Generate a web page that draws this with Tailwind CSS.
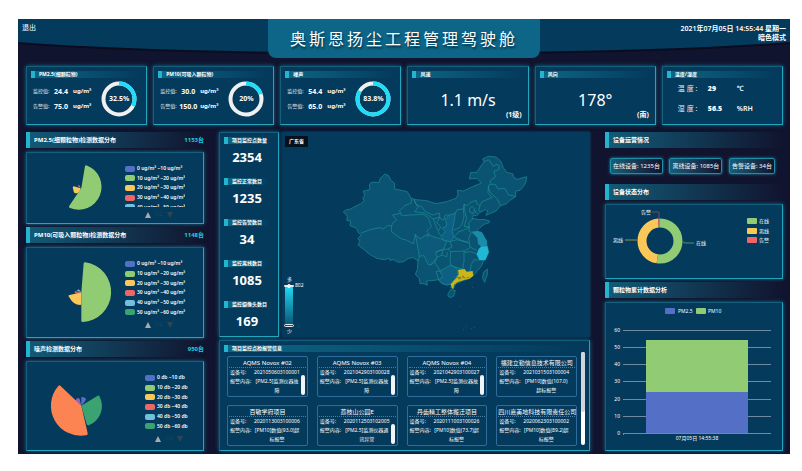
<!DOCTYPE html>
<html lang="zh-CN">
<head>
  <meta charset="UTF-8" />
  <meta name="viewport" content="width=device-width, initial-scale=1.0" />
  <title>奥斯恩扬尘工程管理驾驶舱</title>
  <script src="https://cdn.jsdelivr.net/npm/@tailwindcss/browser@4"></script>
  <style>
    body {
      font-family: 'Noto Sans', 'Noto Sans CJK SC', sans-serif;
    }
    .panel {
      background: #043a5c;
      border: 1px solid #12607c;
      border-right-color: #23a5be;
      border-bottom-color: #23a5be;
      box-shadow: 0 0 4px #0f7391;
    }
    .bar-title {
      border-left: 4px solid #21b5cf;
      background: linear-gradient(90deg, #125a76, #11142e);
    }
    .sub-title {
      border-left: 4px solid #21b5cf;
      background: linear-gradient(90deg, #0d6483, #043a5c);
    }
  </style>
</head>
<body class="bg-white pt-[19px] pl-[18px] pr-3 pb-[17px] text-white">

<div class="bg-[#11142e] pb-[3px]">

  <!-- Top bar -->
  <header class="relative h-[47px]">
    <svg class="absolute inset-0 w-full h-[40px]" viewBox="0 0 772 40" preserveAspectRatio="none">
      <path d="M0 0H772V25Q640 35 386 36Q130 35 0 25Z" fill="#0a0d20" />
      <path d="M0 0H772V23Q640 33 386 34Q130 33 0 23Z" fill="#043a5c" />
    </svg>
    <div class="relative grid grid-cols-[1fr_272px_1fr]">
      <div class="pl-1 pt-1">
        <a href="#" class="block text-[7px] leading-[10px]">退出</a>
      </div>
      <h1 class="h-[39px] rounded-b-lg bg-[#0d6587] text-center text-[16px] leading-[40px] tracking-[3px] [text-shadow:1px_2px_2px_#063047]">奥斯恩扬尘工程管理驾驶舱</h1>
      <div class="pr-1 pt-[5px] flex flex-col items-end text-[7px] leading-[9px] font-semibold">
        <time>2021年07月05日 14:55:44 星期一</time>
        <button type="button" class="font-semibold">暗色模式</button>
      </div>
    </div>
  </header>

  <main class="pl-2 pr-[7px]">

    <!-- Summary cards -->
    <section class="grid grid-cols-6 gap-[6px]">
      <div class="panel h-[59px] p-1">
        <h2 class="sub-title h-[7px] pl-1 text-[5px] leading-[7px] font-bold">PM2.5(细颗粒物)</h2>
        <div class="flex items-center justify-between pl-[2px] pr-[5px] pt-[3px]">
          <div class="leading-[15px] text-[5px]">
            <p class="flex"><span class="w-[18px] text-gray-200">监控值:</span><b class="w-5 text-center text-[7px]">24.4</b><b class="pl-[2px] text-[6px]">ug/m³</b></p>
            <p class="flex"><span class="w-[18px] text-gray-200">告警值:</span><b class="w-5 text-center text-[7px]">75.0</b><b class="pl-[2px] text-[6px]">ug/m³</b></p>
          </div>
          <div class="relative size-9">
            <svg class="size-9 -rotate-90" viewBox="0 0 36 36" fill="none" stroke-width="4">
              <circle cx="18" cy="18" r="15.5" stroke="#f0f0f0" />
              <circle cx="18" cy="18" r="15.5" stroke="#1fdcf8" pathLength="100" stroke-dasharray="32.5 100" />
            </svg>
            <b class="absolute inset-0 grid place-items-center text-[7px]">32.5%</b>
          </div>
        </div>
      </div>
      <div class="panel h-[59px] p-1">
        <h2 class="sub-title h-[7px] pl-1 text-[5px] leading-[7px] font-bold">PM10(可吸入颗粒物)</h2>
        <div class="flex items-center justify-between pl-[2px] pr-[5px] pt-[3px]">
          <div class="leading-[15px] text-[5px]">
            <p class="flex"><span class="w-[18px] text-gray-200">监控值:</span><b class="w-5 text-center text-[7px]">30.0</b><b class="pl-[2px] text-[6px]">ug/m³</b></p>
            <p class="flex"><span class="w-[18px] text-gray-200">告警值:</span><b class="w-5 text-center text-[7px]">150.0</b><b class="pl-[2px] text-[6px]">ug/m³</b></p>
          </div>
          <div class="relative size-9">
            <svg class="size-9 -rotate-90" viewBox="0 0 36 36" fill="none" stroke-width="4">
              <circle cx="18" cy="18" r="15.5" stroke="#f0f0f0" />
              <circle cx="18" cy="18" r="15.5" stroke="#1fdcf8" pathLength="100" stroke-dasharray="20 100" />
            </svg>
            <b class="absolute inset-0 grid place-items-center text-[7px]">20%</b>
          </div>
        </div>
      </div>
      <div class="panel h-[59px] p-1">
        <h2 class="sub-title h-[7px] pl-1 text-[5px] leading-[7px] font-bold">噪声</h2>
        <div class="flex items-center justify-between pl-[2px] pr-[5px] pt-[3px]">
          <div class="leading-[15px] text-[5px]">
            <p class="flex"><span class="w-[18px] text-gray-200">监控值:</span><b class="w-5 text-center text-[7px]">54.4</b><b class="pl-[2px] text-[6px]">ug/m³</b></p>
            <p class="flex"><span class="w-[18px] text-gray-200">告警值:</span><b class="w-5 text-center text-[7px]">65.0</b><b class="pl-[2px] text-[6px]">ug/m³</b></p>
          </div>
          <div class="relative size-9">
            <svg class="size-9 -rotate-90" viewBox="0 0 36 36" fill="none" stroke-width="4">
              <circle cx="18" cy="18" r="15.5" stroke="#f0f0f0" />
              <circle cx="18" cy="18" r="15.5" stroke="#1fdcf8" pathLength="100" stroke-dasharray="83.8 100" />
            </svg>
            <b class="absolute inset-0 grid place-items-center text-[7px]">83.8%</b>
          </div>
        </div>
      </div>
      <div class="panel h-[59px] p-1">
        <h2 class="sub-title h-[7px] pl-1 text-[5px] leading-[7px] font-bold">风速</h2>
        <p class="pt-3 text-center text-[16px] leading-5">1.1 m/s</p>
        <p class="pr-[2px] text-right text-[7px] leading-[9px] font-bold">(1级)</p>
      </div>
      <div class="panel h-[59px] p-1">
        <h2 class="sub-title h-[7px] pl-1 text-[5px] leading-[7px] font-bold">风向</h2>
        <p class="pt-3 text-center text-[16px] leading-5">178°</p>
        <p class="pr-[2px] text-right text-[7px] leading-[9px] font-bold">(南)</p>
      </div>
      <div class="panel h-[59px] p-1">
        <h2 class="sub-title h-[7px] pl-1 text-[5px] leading-[7px] font-bold">温度/湿度</h2>
        <div class="grid grid-cols-[30px_29px_1fr] pl-[11px] pt-px text-[7px] leading-5 font-semibold">
          <span class="font-normal text-gray-200">温 度 :</span><b>29</b><span>℃</span>
          <span class="font-normal text-gray-200">湿 度 :</span><b>56.5</b><span>%RH</span>
        </div>
      </div>
    </section>

    <section class="grid grid-cols-[178fr_371fr_178fr] gap-[15px] pt-[7px]">

      <!-- Left: distribution charts -->
      <div>
        <h2 class="bar-title flex justify-between h-4 pl-1 text-[6px] leading-4 font-bold"><span>PM2.5(细颗粒物)检测数据分布</span><span class="text-[#1fd0e8]">1153台</span></h2>
        <div class="panel mt-1 flex h-[72px]">
          <svg class="w-[98px] h-[70px]" viewBox="3 3 294 210">
            <path d="M164 109L143 103Q138 105 142 113Q143 124 150 124Q160 125 164 109Z" fill="#fac858" />
            <path d="M164 109L155 101L160 99Z" fill="#ee6666" />
            <path d="M166 108L177 43Q178 38 184 41A68 68 0 1 1 132 168Q127 166 130 161Z" fill="#91cc75" />
          </svg>
          <div class="pt-[11px]">
            <div class="h-[43px] overflow-hidden"><ul class="legend flex flex-col" data-unit="ug/m³" data-count="5"></ul></div>
            <div class="pager"></div>
          </div>
        </div>

        <h2 class="bar-title mt-[3px] flex justify-between h-4 pl-1 text-[6px] leading-4 font-bold"><span>PM10(可吸入颗粒物)检测数据分布</span><span class="text-[#1fd0e8]">1148台</span></h2>
        <div class="panel mt-1 flex h-[91px]">
          <svg class="w-[98px] h-[89px]" viewBox="3 3 294 267">
            <path d="M166 136L128 145Q126 147 131 153Q142 173 162 174Q166 174 166 170Z" fill="#fac858" />
            <path d="M166 136L147 139L146 133Z" fill="#ee6666" />
            <path d="M166 136L152 131L158 127Z" fill="#73c0de" />
            <path d="M166 136L173 49Q173 46 178 46A90 90 0 0 1 170 225Q166 225 166 221Z" fill="#91cc75" />
          </svg>
          <div class="pt-[11px]">
            <ul class="legend flex flex-col" data-unit="ug/m³" data-count="6"></ul>
            <div class="pager"></div>
          </div>
        </div>

        <h2 class="bar-title mt-[3px] flex justify-between h-4 pl-1 text-[6px] leading-4 font-bold"><span>噪声检测数据分布</span><span class="text-[#1fd0e8]">950台</span></h2>
        <div class="panel mt-1 flex h-[90px]">
          <svg class="w-[98px] h-[88px]" viewBox="3 3 294 264">
            <path d="M166 134L149 119Q149 110 160 112Z" fill="#9a60b4" />
            <path d="M166 134L166 109Q172 105 180 113Q181 118 166 134Z" fill="#5470c6" />
            <path d="M166 134L215 104Q219 102 221 107A62 62 0 0 1 189 193Q184 194 182 190Z" fill="#3ba272" />
            <path d="M166 134L103 74Q100 71 97 75A90 90 0 0 0 180 223Q186 223 185 217Z" fill="#fc8452" />
          </svg>
          <div class="pl-5 pt-[11px]">
            <ul class="legend flex flex-col" data-unit="db" data-count="6"></ul>
            <div class="pager -ml-[10px]"></div>
          </div>
        </div>
      </div>

      <!-- Middle: counters, map, alarms -->
      <div>
        <div class="grid grid-cols-[60px_1fr] gap-[3px]">
          <dl class="panel grid h-[205px] auto-rows-[41px] pl-1 pr-2 pt-1 text-center">
            <div><dt class="sub-title h-[7px] pl-1 text-left text-[5px] leading-[7px] font-bold whitespace-nowrap">项目监控点数量</dt><dd class="pt-1 text-[13px] leading-[18px] font-bold">2354</dd></div>
            <div><dt class="sub-title h-[7px] pl-1 text-left text-[5px] leading-[7px] font-bold whitespace-nowrap">监控正常数目</dt><dd class="pt-1 text-[13px] leading-[18px] font-bold">1235</dd></div>
            <div><dt class="sub-title h-[7px] pl-1 text-left text-[5px] leading-[7px] font-bold whitespace-nowrap">监控告警数目</dt><dd class="pt-1 text-[13px] leading-[18px] font-bold">34</dd></div>
            <div><dt class="sub-title h-[7px] pl-1 text-left text-[5px] leading-[7px] font-bold whitespace-nowrap">监控离线数目</dt><dd class="pt-1 text-[13px] leading-[18px] font-bold">1085</dd></div>
            <div><dt class="sub-title h-[7px] pl-1 text-left text-[5px] leading-[7px] font-bold whitespace-nowrap">监控摄像头数目</dt><dd class="pt-1 text-[13px] leading-[18px] font-bold">169</dd></div>
          </dl>

          <div class="relative h-[205px] bg-[#043a5c] shadow-[0_0_3px_#0b4868]">
            <svg class="w-full h-full" viewBox="-144 -9 924 615" stroke="#1d8f92" stroke-width="2" stroke-linejoin="round" fill="none">
              <path fill="#0b5372" d="M40 230L50 224 62 222 72 216 84 210 92 206 103 198 98 188 104 182 100 168 120 164 118 150 124 142 148 142 150 130 158 124 164 117 176 122 182 135 194 145 194 162 210 165 232 170 244 190 258 194 290 197 318 206 350 200 378 190 384 180 382 166 400 168 430 154 454 144 440 130 418 132 422 112 440 112 462 80 458 72 475 64 498 66 512 78 520 98 530 112 548 116 552 128 562 133 590 125 588 140 580 155 570 166 558 168 556 186 540 196 530 206 512 212 498 228 468 241 474 228 465 224 450 232 440 243 430 240 428 250 448 254 462 253 479 258 476 264 462 268 450 278 440 288 455 292 462 304 470 318 470 330 474 340 476 352 468 370 460 378 454 394 440 410 428 424 412 432 392 440 378 446 370 460 362 458 366 447 350 450 335 445 326 434 312 436 290 438 292 451 282 446 270 446 268 430 256 418 262 404 264 378 250 368 236 370 220 380 205 382 190 374 180 376 178 370 162 374 140 370 116 356 100 342 84 330 90 320 84 310 94 300 84 292 80 280 60 272 62 258 50 256 52 244Z" />
              <path fill="#0d5f83" d="M346 252L358 240 376 234 372 262 366 290 372 306 360 320 340 316 334 304 346 290 336 280 350 272Z" />
              <path fill="#0d5f83" d="M330 408L362 390 380 400 384 418 364 446 350 450 335 445 326 434 338 426Z" />
              <path fill="#0c5979" d="M256 298L270 312 290 298 318 308 334 312 350 320 340 344 316 352 322 366 302 390 294 388 282 362 268 364 262 330Z" />
              <path d="M94 294L120 284 150 278 160 282 172 272 185 272 190 262 200 256 188 240 214 234 208 228 224 212 244 204 244 190" />
              <path d="M210 238L220 242 240 240 280 238 296 250 304 275 290 288 298 296 290 306 M185 272L184 290 215 312 226 314 250 326 256 298" />
              <path d="M268 364L264 378 M252 194L264 218 254 230 282 234 296 242 310 252 330 246 320 262 332 276 324 290 334 304 M310 252L318 274 324 286" />
              <path d="M252 194L258 208 276 216 284 228 308 240 328 234 330 250 340 256 346 240 358 240 M376 234L382 224 400 222 402 208 412 212 420 203 438 196 440 206 450 212 456 200 486 188 474 172 476 150 484 148 480 138 496 126 492 108 506 104 508 92 498 88 490 94 476 74 462 80" />
              <path d="M484 148L496 148 504 162 524 160 536 180 556 184 M474 154L480 172 502 192 512 212 M450 212L446 226 452 232" />
              <path d="M400 222L402 244 396 268 388 278 370 286 M402 208L406 236 410 250 402 274 M418 222L426 214 434 222 430 236 420 232ZM434 224L440 236M402 274L418 276 416 264 430 250" />
              <path d="M372 306L386 290 400 286 418 276 M418 276L416 288 424 292 416 310 420 336 440 346 M372 306L394 316 414 322M360 320L380 314 418 324M360 320L366 336 354 342 328 346 318 352M354 342L362 350 402 348 420 338" />
              <path d="M322 366L336 360 350 366 352 352M362 350L360 380 362 390M402 348L402 380 398 402M402 352L422 350 440 356M446 376L432 374 424 388 420 408M362 390L374 396 398 402M302 390L314 382 324 398 330 408 318 410 326 434M314 382L322 366M340 346L334 360" />
              <path fill="#1a8ca9" d="M424 290L440 288 455 292 470 318 472 332 452 334 444 326 442 308Z" stroke="none" />
              <path fill="#20b8d6" d="M446 342L454 334 472 334 476 352 466 376 448 376 440 358Z" stroke="none" />
              <path fill="#c9b51c" d="M366 460L362 448 378 430 386 418 384 404 404 402 410 410 428 408 430 422 418 432 404 434 382 442 372 450 370 462Z" stroke="none" />
              <path stroke="#665f2c" d="M380 427h14M384 431h10M398 428h8M410 428h8M396 424h6" />
              <path fill="#0b5372" d="M354 476L362 464 376 466 372 482 362 488 354 484ZM460 412L472 402 472 418 464 442 458 430Z" />
              <path d="M427 457h2M388 514h2M408 573v2M424 580h2M432 577h2M400 584h2" />
            </svg>
            <span class="absolute left-[3px] top-1 bg-[#04101c] px-1 text-[5px] leading-[11px] font-bold">广东省</span>
            <div class="absolute left-[3px] bottom-[2px] text-[5px] leading-[7px]">
              <p class="pl-[2px] pb-[3px]">多</p>
              <div class="relative h-10 w-2 bg-linear-to-b from-[#1fdcf8] to-[#0b5372]">
                <i class="absolute -left-px -top-px h-[2px] w-[10px] rounded-sm bg-gray-200"></i>
                <i class="absolute left-[2px] -top-[2px] size-1 rounded-full border border-white"></i>
                <span class="absolute left-[10px] -top-1">802</span>
                <i class="absolute -left-px -bottom-px h-[3px] w-[10px] rounded-sm border border-gray-200"></i>
                <span class="absolute left-3 -bottom-1 text-[#1d5472]">0</span>
              </div>
              <p class="pl-[2px] pt-[2px]">少</p>
            </div>
          </div>
        </div>

        <div class="panel mt-[3px] h-[111px] p-1">
          <h2 class="sub-title h-[7px] pl-1 text-[5px] leading-[7px] font-bold">项目监控点检报警信息</h2>
          <div class="flex gap-1">
            <div id="alarms" class="grid grow grid-cols-4 gap-x-[9px] gap-y-2 pl-[3px] pt-1"></div>
            <div class="h-[93px] w-1 rounded bg-white"><div class="h-[60px] rounded bg-gray-300"></div></div>
          </div>
        </div>
      </div>

      <!-- Right: device status -->
      <div>
        <h2 class="bar-title h-4 pl-1 text-[6px] leading-4 font-bold">设备运营情况</h2>
        <div class="flex justify-between pl-[5px] pr-2 py-[10px] text-[6px] leading-[14px]">
          <button type="button" class="rounded-xs border border-[#1d8ea8] bg-linear-to-r from-[#12607c] to-[#11142e] px-[2px] shadow-[0_0_3px_#1794ae]">在线设备: 1235台</button>
          <button type="button" class="rounded-xs border border-[#1d8ea8] bg-linear-to-r from-[#12607c] to-[#11142e] px-[2px] shadow-[0_0_3px_#1794ae]">离线设备: 1085台</button>
          <button type="button" class="rounded-xs border border-[#1d8ea8] bg-linear-to-r from-[#12607c] to-[#11142e] px-[2px] shadow-[0_0_3px_#1794ae]">告警设备: 34台</button>
        </div>
        <h2 class="bar-title h-4 pl-1 text-[6px] leading-4 font-bold">设备状态分布</h2>
        <div class="panel mt-1 h-[75px]">
          <svg class="w-full h-full" viewBox="1 1 176 73" fill="none">
            <g stroke-width="9" transform="rotate(-90 55 37)">
              <circle cx="55" cy="37" r="18" stroke="#91cc75" pathLength="100" stroke-dasharray="52.5 100" />
              <circle cx="55" cy="37" r="18" stroke="#fac858" pathLength="100" stroke-dasharray="46 100" stroke-dashoffset="-52.5" />
              <circle cx="55" cy="37" r="18" stroke="#ee6666" pathLength="100" stroke-dasharray="1.5 100" stroke-dashoffset="-98.5" />
            </g>
            <path d="M54 14V8H47" stroke="#b06070" stroke-width=".6" />
            <path d="M32 36H20" stroke="#fac858" stroke-width=".6" />
            <path d="M78 38L80 39H89" stroke="#91cc75" stroke-width=".6" />
            <g fill="#fff" font-size="5">
              <text x="36" y="10">告警</text>
              <text x="8" y="38">离线</text>
              <text x="91" y="41">在线</text>
              <text x="154" y="19">在线</text>
              <text x="154" y="29">离线</text>
              <text x="154" y="38">告警</text>
            </g>
            <rect x="142" y="14" width="10" height="6" rx="1" fill="#91cc75" />
            <rect x="142" y="24" width="10" height="6" rx="1" fill="#fac858" />
            <rect x="142" y="33" width="10" height="6" rx="1" fill="#ee6666" />
          </svg>
        </div>
        <h2 class="bar-title mt-[3px] h-4 pl-1 text-[6px] leading-4 font-bold">颗粒物累计数据分析</h2>
        <div class="panel mt-1 h-[149px]">
          <svg class="w-full h-full" viewBox="1 1 176 147" fill="#fff" font-size="5">
            <rect x="60" y="6" width="10" height="6" rx="1" fill="#5470c6" />
            <text x="73" y="11">PM2.5</text>
            <rect x="91" y="6" width="10" height="6" rx="1" fill="#91cc75" />
            <text x="103" y="11">PM10</text>
            <path d="M18 28.5H166M18 45.5H166M18 62.5H166M18 79.5H166M18 97.5H166M18 114.5H166M18 131.5H166M18.5 131V133" stroke="#6f8ba3" />
            <g text-anchor="end">
              <text x="15" y="30">60</text>
              <text x="15" y="47">50</text>
              <text x="15" y="64">40</text>
              <text x="15" y="81">30</text>
              <text x="15" y="99">20</text>
              <text x="15" y="116">10</text>
              <text x="15" y="133">0</text>
            </g>
            <rect x="41" y="38" width="102" height="52" fill="#91cc75" />
            <rect x="41" y="90" width="102" height="41" fill="#5470c6" />
            <text x="92" y="138" text-anchor="middle">07月05日 14:55:38</text>
          </svg>
        </div>
      </div>
    </section>
  </main>
</div>

<script>
  const colors = ["#5470c6", "#91cc75", "#fac858", "#ee6666", "#73c0de", "#3ba272"];

  document.querySelectorAll(".legend").forEach(list => {
    const { unit, count } = list.dataset;
    list.style.height = `${Math.round(count * 58 / 6)}px`;
    list.innerHTML = colors.slice(0, count).map((color, i) => `
      <li class="flex flex-1 items-center gap-[2px] text-[5px] leading-[7px] font-semibold whitespace-nowrap">
        <i class="h-[6px] w-[10px] rounded-xs" style="background:${color}"></i>${i * 10} ${unit} ~${i * 10 + 10} ${unit}
      </li>`).join("");
  });

  document.querySelectorAll(".pager").forEach(pager => {
    pager.innerHTML = `
      <div class="flex items-center gap-1 pl-5 pt-1 text-[5px] leading-[7px] text-[#1d4763]">
        <svg class="size-[6px]" viewBox="0 0 6 6"><path d="M3 0L6 6H0Z" fill="#aaa" /></svg>
        <span>1/2</span>
        <svg class="size-[6px]" viewBox="0 0 6 6"><path d="M0 0H6L3 6Z" fill="#2f4554" /></svg>
      </div>`;
  });

  const alarms = [
    { name: "AQMS Novox #02", id: "2021050603100001", text: "[PM2.5]监测仪器故障", scroll: true },
    { name: "AQMS Novox #03", id: "2021042903100028", text: "[PM2.5]监测仪器故障", scroll: true },
    { name: "AQMS Novox #04", id: "2021042903100027", text: "[PM2.5]监测仪器故障", scroll: true },
    { name: "福建立勤信息技术有限公司", id: "2021031503100004", text: "[PM10]数值(107.0)超标报警" },
    { name: "百敏学府项目", id: "2020113003100006", text: "[PM10]数值(93.0)超标报警" },
    { name: "荔枝山公园E", id: "2020112503102005", text: "[PM2.5]监测仪器通讯异常", scroll: true },
    { name: "丹齿精工整体搬迁项目", id: "2020111003100026", text: "[PM10]数值(73.7)超标报警" },
    { name: "四川嘉美地科技有限责任公司", id: "2020062303100002", text: "[PM10]数值(89.2)超标报警" }
  ];

  document.getElementById("alarms").innerHTML = alarms.map(alarm => `
    <article class="relative h-[41px] rounded-xs border border-[#2f6c9c] px-px pt-[2px] text-[5px] leading-[9px]">
      <h3 class="h-[9px] border-b border-dotted border-[#4a7da3] text-center text-[6px] leading-[8px] whitespace-nowrap">${alarm.name}</h3>
      <p class="flex pl-px"><span class="w-6 shrink-0">设备号:</span><span>${alarm.id}</span></p>
      <p class="flex pl-px"><span class="w-6 shrink-0">报警内容:</span><span class="w-[46px] text-center">${alarm.text}</span></p>
      ${alarm.scroll ? `<i class="absolute right-[2px] bottom-px h-5 w-1 rounded bg-gray-100"></i>` : ""}
    </article>`).join("");
</script>
</body>
</html>
